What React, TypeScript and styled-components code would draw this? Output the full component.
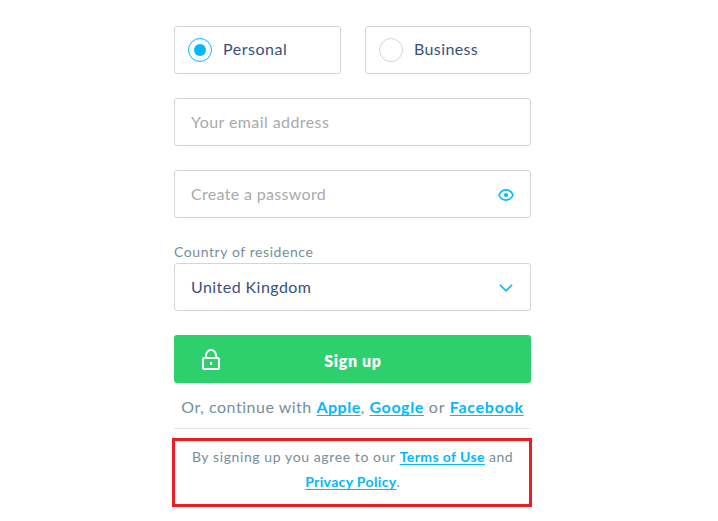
import React from 'react';
import styled, { createGlobalStyle } from 'styled-components';

const GlobalStyle = createGlobalStyle`
  *, *::before, *::after { box-sizing: border-box; }
  body { margin: 0; background: #fff; font-family: Lato, "Open Sans", sans-serif; }
`;

const Page = styled.main`
  display: flex;
  justify-content: center;
  width: 718px;
  height: 521px;
  padding: 26px 13px 0 0;
  overflow: hidden;
`;

const Form = styled.form`
  display: flex;
  flex-direction: column;
  width: 357px;
`;

const AccountTypes = styled.div`
  display: grid;
  grid-template-columns: 167px 166px;
  justify-content: space-between;
  margin-bottom: 24px;
`;

const Text = styled.span<{ $spacing: number; $muted?: boolean }>`
  letter-spacing: ${p => p.$spacing}px;
  white-space: pre;
  ${p => p.$muted && 'color: #a8aaac;'}
`;

const Box = styled.div`
  display: flex;
  align-items: center;
  height: 48px;
  border: 1px solid #d3d5d8;
  border-radius: 3px;
  color: #37517e;
  font-size: 16px;

  ${Text} { padding-bottom: 2px; }
`;

const Choice = styled(Box)`
  gap: 11px;
  padding: 0 13px;

  ${Text} { padding-bottom: 3px; }
`;

const Radio = styled.span<{ $checked?: boolean }>`
  display: flex;
  align-items: center;
  justify-content: center;
  width: 24px;
  height: 24px;
  border: 1px solid ${p => (p.$checked ? '#00b9ff' : '#d3d5d8')};
  border-radius: 50%;

  &::after {
    content: '';
    width: 12px;
    height: 12px;
    border-radius: 50%;
    background: ${p => (p.$checked ? '#00b9ff' : 'transparent')};
  }
`;

const Field = styled(Box)<{ $gap: number }>`
  justify-content: space-between;
  padding: 0 16px;
  margin-bottom: ${p => p.$gap}px;
`;

const Label = styled.label`
  height: 21px;
  color: #768e9c;
  font-size: 14px;
  line-height: 19px;
`;

const SubmitButton = styled.button`
  display: grid;
  grid-template-columns: 74px 1fr 74px;
  align-items: center;
  height: 48px;
  padding: 0;
  border: 0;
  border-radius: 3px;
  background: #2ed06e;
  color: #fff;
  font: 800 16px Lato, sans-serif;

  svg { justify-self: center; }
  span { padding: 2px 0 0 1px; }
`;

const Alternatives = styled.p`
  height: 46px;
  margin: 0;
  border-bottom: 1px solid #e2e6e8;
  color: #768e9c;
  font-size: 16px;
  line-height: 48px;
  text-align: center;
  white-space: nowrap;
`;

const Link = styled.a<{ $spacing: number }>`
  color: #00b9ff;
  font-weight: 700;
  letter-spacing: ${p => p.$spacing}px;
  text-decoration: underline;
  text-decoration-thickness: 1px;
  text-underline-offset: 2px;
  text-decoration-skip-ink: none;
`;

const Terms = styled.div`
  width: 360px;
  height: 69px;
  margin: 9px 0 0 -2px;
  padding: 3px 0 0 1px;
  border: 3px solid #ed1c24;
  color: #768e9c;
  font-size: 14px;
  line-height: 25px;
  text-align: center;
  white-space: nowrap;
`;

const EyeIcon = () => (
  <svg width="16" height="16" viewBox="0 0 16 16" fill="none">
    <path d="M1 9C2.6 5.5 4.8 3.9 8 3.9S13.4 5.5 15 9C13.4 12.5 11.2 14.1 8 14.1S2.6 12.5 1 9Z" stroke="#00b9ff" strokeWidth="1.6" />
    <circle cx="8" cy="9" r="2.1" fill="#00b9ff" />
  </svg>
);

const ChevronIcon = () => (
  <svg width="16" height="12" viewBox="0 0 16 12" fill="none">
    <path d="M1.9 3.7 8 9.8 14.1 3.7" stroke="#00b9ff" strokeWidth="1.6" />
  </svg>
);

const LockIcon = () => (
  <svg width="18" height="22" viewBox="0 0 18 22" fill="none" stroke="#fff" strokeWidth="2">
    <path d="M4 10V7.5a5 5.5 0 0 1 10 0V10" />
    <rect x="1" y="10" width="16" height="11" rx="1" />
    <path d="M9 14v3" />
  </svg>
);

export default function App() {
  return (
    <>
      <GlobalStyle />
      <Page>
        <Form>
          <AccountTypes>
            <Choice><Radio $checked /><Text $spacing={0.54}>Personal</Text></Choice>
            <Choice><Radio /><Text $spacing={0.38}>Business</Text></Choice>
          </AccountTypes>
          <Field $gap={24}><Text $spacing={0.42} $muted>Your email address</Text></Field>
          <Field $gap={24}><Text $spacing={0.33} $muted>Create a password</Text><EyeIcon /></Field>
          <Label><Text $spacing={0.58}>Country of residence</Text></Label>
          <Field $gap={24}><Text $spacing={0.44}>United Kingdom</Text><ChevronIcon /></Field>
          <SubmitButton type="button"><LockIcon /><Text $spacing={0.64}>Sign up</Text></SubmitButton>
          <Alternatives>
            <Text $spacing={0.52}>Or, continue with </Text>
            <Link $spacing={0.5}>Apple</Link><Text $spacing={0.5}>, </Text>
            <Link $spacing={0.6}>Google</Link><Text $spacing={0.8}> or </Text>
            <Link $spacing={0.7}>Facebook</Link>
          </Alternatives>
          <Terms>
            <Text $spacing={0.6}>By signing up you agree to our </Text>
            <Link $spacing={0.4}>Terms of Use</Link><Text $spacing={0.5}> and</Text>
            <br />
            <Link $spacing={0.35}>Privacy Policy</Link>.
          </Terms>
        </Form>
      </Page>
    </>
  );
}
